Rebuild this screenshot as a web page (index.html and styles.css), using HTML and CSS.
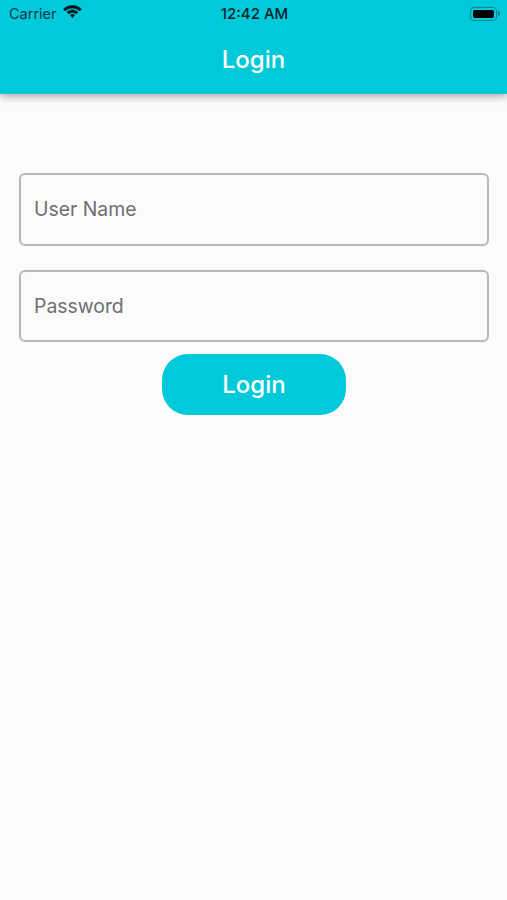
FILE: index.html
```html
<!DOCTYPE html>
<html lang="en">
<head>
  <meta charset="UTF-8">
  <title>Login</title>
  <meta name="viewport" content="width=device-width, initial-scale=1.0">
  <link rel="stylesheet" href="styles.css">
</head>
<body>

  <header class="appbar">
    <div class="status">
      <div class="status-left">
        <span class="carrier">Carrier</span>
        <svg class="wifi" width="19" height="14" viewBox="0 0 19 14">
          <path d="M9.5 0.5C6 0.5 2.900 1.800 0.500 4L2.300 5.900C4.200 4.100 6.700 3.100 9.500 3.100C12.300 3.100 14.800 4.100 16.700 5.900L18.500 4C16.100 1.800 13 0.500 9.500 0.500Z"/>
          <path d="M9.500 5C7.500 5 5.600 5.800 4.100 7.100L5.900 9C6.900 8.100 8.100 7.600 9.500 7.600C10.900 7.600 12.100 8.100 13.100 9L14.900 7.100C13.400 5.800 11.500 5 9.500 5Z"/>
          <path d="M9.500 9.300C8.700 9.300 8 9.600 7.500 10.100L9.500 12.800L11.500 10.100C11 9.600 10.300 9.300 9.500 9.300Z"/>
        </svg>
      </div>
      <span class="clock">12:42 AM</span>
      <div class="battery">
        <div class="battery-body"><div class="battery-fill"></div></div>
        <div class="battery-tip"></div>
      </div>
    </div>
    <h1 class="appbar-title">Login</h1>
  </header>

  <main class="form">
    <input class="field" type="text" placeholder="User Name">
    <input class="field" type="password" placeholder="Password">
    <button class="login-btn">Login</button>
  </main>

</body>
</html>
```

FILE: styles.css
```css
* {
  box-sizing: border-box;
}
html, body {
  height: 100%;
}
body {
  margin: 0;
  background-color: #fbfbfb;
  font-family: 'Inter', sans-serif;
  overflow: hidden;
}
.appbar {
  height: 94px;
  background-color: #00c9da;
  box-shadow: 0 3px 7px rgba(0,0,0,0.3);
}
.status {
  height: 27px;
  padding: 0 7px 0 9px;
  display: grid;
  grid-template-columns: 1fr auto 1fr;
  align-items: center;
}
.status-left {
  display: flex;
  align-items: center;
  gap: 6px;
}
.carrier {
  font-size: 14.5px;
  color: #063a45;
}
.wifi {
  margin-top: -3px;
  fill: #04141a;
  stroke: #04141a;
  stroke-width: 0.6;
}
.clock {
  font-size: 15px;
  font-weight: 500;
  color: #04222a;
}
.battery {
  display: flex;
  align-items: center;
  justify-content: flex-end;
}
.battery-body {
  width: 27px;
  height: 14px;
  padding: 2px;
  border: 1px solid #0a8694;
  border-radius: 4px;
}
.battery-fill {
  height: 100%;
  background-color: #000;
  border-radius: 2px;
}
.battery-tip {
  width: 2px;
  height: 5px;
  margin-left: 1px;
  background-color: #0a8694;
  border-radius: 0 2px 2px 0;
}
.appbar-title {
  margin: 0;
  padding-top: 19px;
  font-size: 24px;
  font-weight: 500;
  line-height: 28px;
  color: #fff;
  text-align: center;
}
.form {
  padding: 79px 18px 0 19px;
  display: flex;
  flex-direction: column;
  align-items: center;
}
.field {
  display: block;
  width: 100%;
  height: 72.5px;
  margin-bottom: 24px;
  padding: 0 13px;
  background: transparent;
  border: 2px solid #b8b8b8;
  border-radius: 6px;
  font-family: 'Inter', sans-serif;
  font-size: 19.4px;
  color: #333;
}
.field::placeholder {
  color: #6f6f6f;
  opacity: 1;
}
.login-btn {
  width: 184px;
  height: 61px;
  margin-top: -12px;
  background-color: #00c9da;
  color: #fff;
  border: none;
  border-radius: 26px;
  font-family: 'Inter', sans-serif;
  font-size: 24px;
  font-weight: 500;
  cursor: pointer;
}
```
